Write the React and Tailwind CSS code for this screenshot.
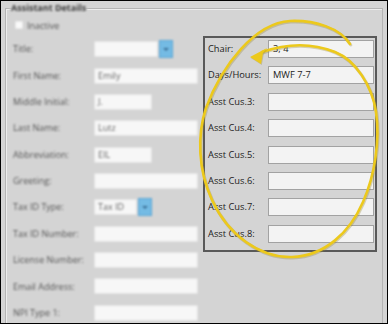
import React from "react";

const leftRows = [
  { label: "Title:", w: 64, dd: true },
  { label: "First Name:", w: 104, value: "Emily" },
  { label: "Middle Initial:", w: 58, value: "J." },
  { label: "Last Name:", w: 104, value: "Lutz" },
  { label: "Abbreviation:", w: 58, value: "EIL" },
  { label: "Greeting:", w: 104 },
  { label: "Tax ID Type:", w: 43, dd: true, value: "Tax ID" },
  { label: "Tax ID Number:", w: 104 },
  { label: "License Number:", w: 104 },
  { label: "Email Address:", w: 104 },
  { label: "NPI Type 1:", w: 104 },
];

const rightRows = [
  { label: "Chair:", value: "3, 4" },
  { label: "Days/Hours:", value: "MWF 7-7" },
  { label: "Asst Cus.3:" },
  { label: "Asst Cus.4:" },
  { label: "Asst Cus.5:" },
  { label: "Asst Cus.6:" },
  { label: "Asst Cus.7:" },
  { label: "Asst Cus.8:" },
];

const ELLIPSE =
  "M 350 44 C 340 28, 315 20, 290 21 C 255 23, 222 65, 206 108 C 197 135, 198 170, 212 200 C 228 235, 260 258, 292 257 C 325 256, 350 232, 363 202 C 375 175, 380 140, 376 112 C 372 85, 355 60, 335 52 C 310 42, 285 44, 262 52";

export default function App() {
  return (
    <div className="w-[388px] h-[324px] border border-black bg-[#d4d4d4] relative overflow-hidden font-['Open_Sans',sans-serif] flex flex-col">
      <div className="mt-[7px] ml-[4px] w-[378px] h-[330px] border border-[#b4b4b4] shadow-[inset_1px_1px_0_#ececec] relative shrink-0">
        <div className="absolute left-[4px] top-[-8px] px-[1px] bg-[#d4d4d4] text-[9px] leading-[14px] font-bold text-[#3c3c3c] blur-[1px]">
          Assistant Details
        </div>
        <div className="mt-[12px] ml-[9px] flex items-center gap-[4px] h-[8px] blur-[1px]">
          <div className="w-[8px] h-[8px] bg-[#fafafa] border border-[#e8e8e8]" />
          <span className="text-[9px] leading-none text-[#555]">Inactive</span>
        </div>
        <div className="mt-[7px] flex items-start">
          <div className="w-[197px] pl-[7px] flex flex-col blur-[1.1px]">
            {leftRows.map((r) => (
              <div key={r.label} className="h-[26.35px] flex items-center">
                <div className="w-[81px] text-[9px] text-[#555] whitespace-nowrap">{r.label}</div>
                <div
                  className="h-[16px] bg-[#f7f7f7] border border-[#e2e2e2] text-[9px] leading-[14px] text-[#666] pl-[3px]"
                  style={{ width: r.w }}
                >
                  {r.value || ""}
                </div>
                {r.dd && (
                  <div className="ml-[1px] w-[14px] h-[18px] bg-[#74bbe4] border border-[#5aa6d6] flex items-center justify-center">
                    <div className="w-0 h-0 border-l-[3px] border-r-[3px] border-t-[3px] border-l-transparent border-r-transparent border-t-[#3a6f95]" />
                  </div>
                )}
              </div>
            ))}
          </div>
          <div className="w-[174px] border-2 border-[#595959] pt-[2px] pb-[7px] pl-[3px] flex flex-col gap-[8.4px]">
            {rightRows.map((r) => (
              <div key={r.label} className="flex items-center h-[18px]">
                <div className="w-[60px] text-[9.3px] text-[#1c1c1c] whitespace-nowrap">{r.label}</div>
                <div className="w-[106px] h-[18px] bg-[#f3f3f3] border border-[#a2a2a2] text-[9.3px] leading-[16px] text-[#1c1c1c] pl-[4px]">
                  {r.value || ""}
                </div>
              </div>
            ))}
          </div>
        </div>
      </div>
      <svg className="absolute left-[-1px] top-[-1px] pointer-events-none" width="388" height="324" viewBox="0 0 388 324">
        <g fill="none" strokeLinecap="round">
          <path d={ELLIPSE} stroke="#9a8a3a" strokeOpacity="0.35" strokeWidth="3" transform="translate(0.8,1)" />
          <path d={ELLIPSE} stroke="#ecc91c" strokeWidth="2.6" />
        </g>
        <polygon points="250,57 267,48 263,53 261,64" fill="#9a8a3a" fillOpacity="0.35" transform="translate(0.8,1)" />
        <polygon points="250,57 267,48 263,53 261,64" fill="#ecc91c" />
      </svg>
    </div>
  );
}
